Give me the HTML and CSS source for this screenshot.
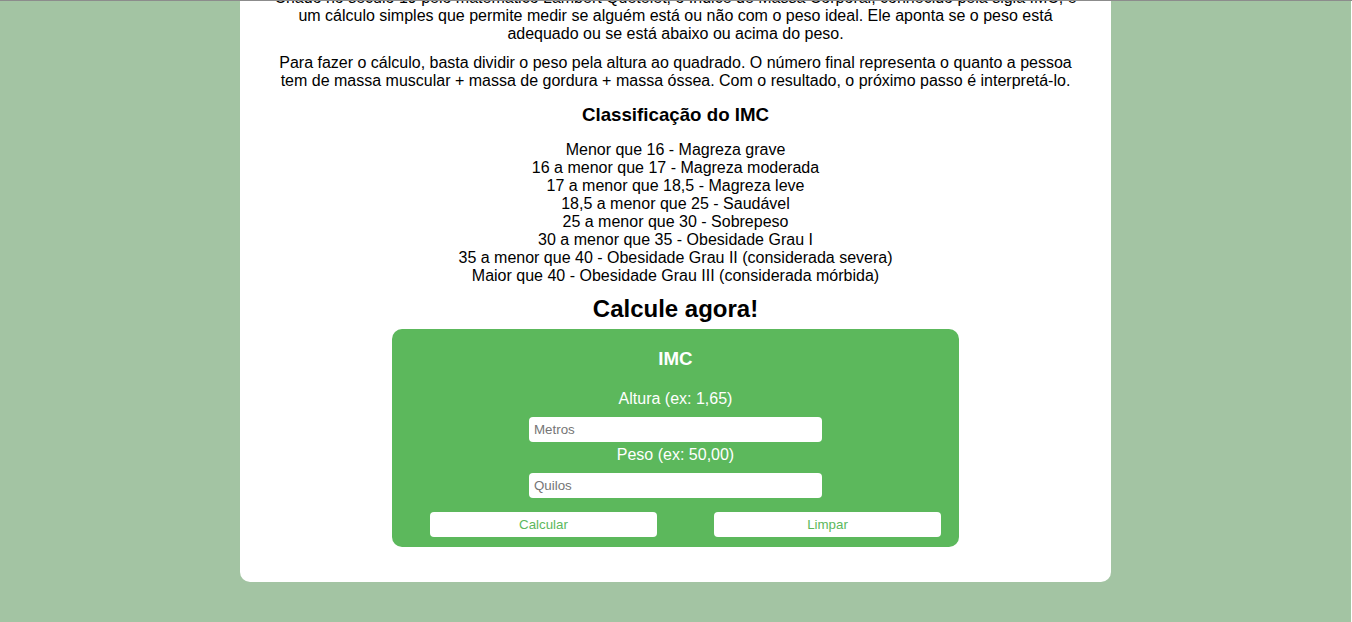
FILE: index.html
```html
<!DOCTYPE html>
<html lang="pt-BR">
<head>
<meta charset="utf-8">
<title>Calculadora de IMC</title>
<link rel="stylesheet" href="styles.css">
</head>
<body>
<main class="card">
  <p class="intro">Criado no século 19 pelo matemático Lambert Quételet, o Índice de Massa Corporal, conhecido pela sigla IMC, é um cálculo simples que permite medir se alguém está ou não com o peso ideal. Ele aponta se o peso está adequado ou se está abaixo ou acima do peso.</p>
  <p class="intro">Para fazer o cálculo, basta dividir o peso pela altura ao quadrado. O número final representa o quanto a pessoa tem de massa muscular + massa de gordura + massa óssea. Com o resultado, o próximo passo é interpretá-lo.</p>
  <h3 class="section-title">Classificação do IMC</h3>
  <ul class="classes">
    <li>Menor que 16 - Magreza grave</li>
    <li>16 a menor que 17 - Magreza moderada</li>
    <li>17 a menor que 18,5 - Magreza leve</li>
    <li>18,5 a menor que 25 - Saudável</li>
    <li>25 a menor que 30 - Sobrepeso</li>
    <li>30 a menor que 35 - Obesidade Grau I</li>
    <li>35 a menor que 40 - Obesidade Grau II (considerada severa)</li>
    <li>Maior que 40 - Obesidade Grau III (considerada mórbida)</li>
  </ul>
  <h2 class="cta">Calcule agora!</h2>
  <form class="calc">
    <h3 class="calc-title">IMC</h3>
    <label class="calc-label" for="altura">Altura (ex: 1,65)</label>
    <input class="calc-input" id="altura" type="text" placeholder="Metros">
    <label class="calc-label calc-label-tight" for="peso">Peso (ex: 50,00)</label>
    <input class="calc-input" id="peso" type="text" placeholder="Quilos">
    <div class="calc-actions">
      <button type="button" class="calc-btn">Calcular</button>
      <button type="reset" class="calc-btn">Limpar</button>
    </div>
  </form>
</main>
<div class="top-edge"></div>
</body>
</html>
```
FILE: styles.css
```css
html {
  margin: 0;
  padding: 0;
  background: #fff;
}
body {
  margin: 0 1px 0 0;
  padding: 0;
  min-height: 100vh;
  background: #a3c4a3;
  font-family: "Liberation Sans", Arial, sans-serif;
  font-size: 16px;
  color: #000;
  overflow: hidden;
}
.top-edge {
  position: fixed;
  top: 0;
  left: 0;
  right: 0;
  height: 1px;
  background: #8c8c8c;
}
.card {
  width: 871px;
  box-sizing: border-box;
  margin: -11px auto 0;
  padding: 0 32px 35px;
  background: #fff;
  border-radius: 0 0 10px 10px;
  text-align: center;
}
.intro {
  margin: 0 0 11px;
  line-height: 18px;
}
.section-title {
  font-size: 18.72px;
  font-weight: bold;
  margin: 14px 0 15px;
  line-height: 22px;
}
.classes {
  list-style: none;
  margin: 0;
  padding: 0;
  line-height: 18px;
}
.cta {
  font-size: 24px;
  font-weight: bold;
  margin: 10px 0 6px;
  line-height: 28px;
}
.calc {
  width: 567px;
  margin: 0 auto;
  box-sizing: border-box;
  background: #5cb85c;
  border-radius: 10px;
  padding: 19px 0 10px;
  display: flex;
  flex-direction: column;
  align-items: center;
  color: #fff;
}
.calc-title {
  margin: 0 0 20px;
  font-size: 18.72px;
  line-height: 22px;
  font-weight: bold;
}
.calc-label {
  display: block;
  line-height: 18px;
  margin-bottom: 9px;
}
.calc-label-tight {
  margin-top: 4px;
}
.calc-input {
  width: 293px;
  height: 25px;
  box-sizing: border-box;
  border: none;
  border-radius: 4px;
  padding: 0 5px;
  font-family: "Liberation Sans", Arial, sans-serif;
  font-size: 13.33px;
  background: #fff;
}
.calc-input::placeholder {
  color: #757575;
}
.calc-actions {
  align-self: stretch;
  display: flex;
  gap: 57px;
  padding: 0 18px 0 38px;
  margin-top: 14px;
}
.calc-btn {
  width: 227px;
  height: 25px;
  border: none;
  border-radius: 4px;
  background: #fff;
  color: #5cb85c;
  font-family: "Liberation Sans", Arial, sans-serif;
  font-size: 13.33px;
  padding: 0;
}
```
